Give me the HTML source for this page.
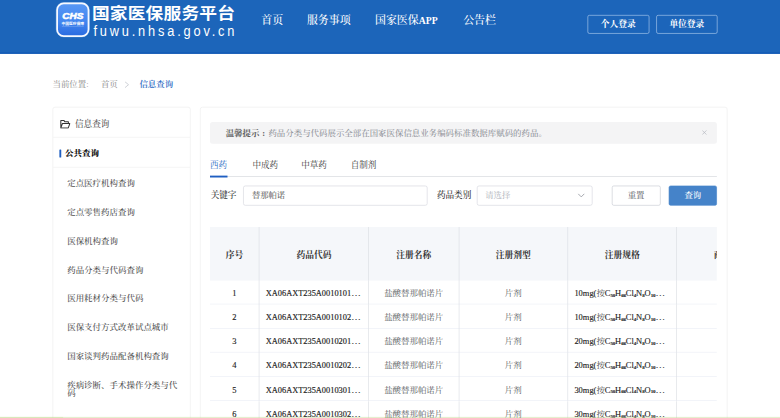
<!DOCTYPE html>
<html lang="zh-CN">
<head>
<meta charset="utf-8">
<title>国家医保服务平台</title>
<style>
*{box-sizing:border-box;margin:0;padding:0}
html,body{width:780px;height:418px;overflow:hidden;background:#fff}
body{font-family:"Liberation Serif","Noto Serif CJK SC",serif;color:#333;font-weight:500}
#stage{position:absolute;left:0;top:0;width:1248px;height:669px;transform:scale(0.625);transform-origin:0 0;overflow:hidden;background:#fff}
.abs{position:absolute}
/* header */
#hdr{position:absolute;left:0;top:0;width:1248px;height:86.3px;background:#1c65ba;border-bottom:2px solid #0f57b4}
#logo{position:absolute;left:88.5px;top:3px;width:55px;height:57px;overflow:visible}
#title{position:absolute;left:147px;top:2.5px;font-family:"Liberation Sans","Noto Sans CJK SC",sans-serif;font-weight:700;font-size:28.4px;line-height:36px;color:#fff;white-space:nowrap;letter-spacing:0.25px;transform:scaleY(0.89);transform-origin:0 50%}
#url{position:absolute;left:149.5px;top:34px;font-family:"Liberation Sans","Noto Sans CJK SC",sans-serif;font-weight:400;font-size:20.5px;line-height:30px;color:#fff;white-space:nowrap;letter-spacing:4.5px;transform:scaleY(1.12);transform-origin:0 50%}
.nav{position:absolute;top:19px;font-size:17.5px;line-height:26px;color:#fff;white-space:nowrap}
.lbtn{position:absolute;top:24px;width:98px;height:30px;border:1.3px solid rgba(210,228,250,.8);border-radius:3px;color:#fff;font-size:14px;font-weight:700;line-height:27.5px;text-align:center}
/* breadcrumb */
#bc{position:absolute;left:84px;top:125.2px;font-size:13.5px;line-height:20px;color:#999;white-space:nowrap}
#bc span{position:absolute;top:0}
/* sidebar */
#side{position:absolute;left:84px;top:170.5px;width:221px;height:520px;border:1.2px solid #ececec;border-radius:4px;background:#fff}
#side .h{position:absolute;left:0;top:0;width:100%;height:48px;border-bottom:1px solid #efefef}
#side .h2{position:absolute;left:0;top:48px;width:100%;height:48.5px;border-bottom:1px solid #efefef}
.mi{position:absolute;left:22.5px;font-size:13.55px;line-height:14px;color:#505050;white-space:nowrap}
/* main */
#main{position:absolute;left:320px;top:170.5px;width:844px;height:520px;border:1.2px solid #ececec;border-radius:4px;background:#fff}
#alert{position:absolute;left:336px;top:195px;width:811px;height:35px;background:#f4f4f5;border-radius:4px;font-size:13.5px;line-height:35.5px;color:#909399;padding-left:25px;white-space:nowrap}
#alert b{color:#5e5e5e;font-weight:700}
.tab{position:absolute;top:253px;font-size:13.7px;line-height:22px;color:#3a3a3a;font-weight:400;white-space:nowrap}
.lab{position:absolute;top:301.5px;font-size:13.8px;line-height:22px;color:#333;white-space:nowrap}
.inp{position:absolute;top:296.5px;height:32px;border:1.2px solid #d3d6dd;border-radius:3.5px;font-size:13.3px;line-height:30.5px;padding-left:13px;color:#666;background:#fff;white-space:nowrap}
.btn{position:absolute;top:296.5px;width:77.5px;height:32px;border:1.2px solid #c6c9d0;border-radius:3px;font-size:13.5px;font-weight:400;line-height:30px;text-align:center;color:#606266;background:#fff}
/* table */
#tbl{position:absolute;left:336px;top:363px;width:811px;height:320px;overflow:hidden}
#thead{position:absolute;left:0;top:0;width:811px;height:85.5px;background:#f5f7fa}
.th{position:absolute;top:0;height:85.5px;border-right:1.6px solid #dadde3;font-size:14px;font-weight:700;color:#333;line-height:90.5px;text-align:center;white-space:nowrap}
.row{position:absolute;left:0;width:811px;height:38.6px;border-bottom:1px solid #ebeef5}
.td{position:absolute;top:0;height:38.6px;border-right:1.6px solid #dadde3;font-size:13.5px;color:#5a5d63;font-weight:400;line-height:41px;text-align:center;white-space:nowrap;overflow:hidden}
.td.l{text-align:left;padding-left:10px}
.td.code{color:#222;font-size:13.35px;letter-spacing:0;-webkit-text-stroke:0.25px #222}
.el{letter-spacing:2px;margin-left:1px}
.lat{color:#222;-webkit-text-stroke:0.2px #222}
.lat .cj{-webkit-text-stroke:0}
sub{font-size:8px;font-weight:700;vertical-align:baseline;position:relative;top:1.5px;line-height:0;letter-spacing:-0.3px}
.cj{color:#444}
</style>
</head>
<body>
<div id="stage">
  <div id="hdr">
    <svg id="logo" viewBox="0 0 55 57">
      <defs>
        <linearGradient id="lg" x1="0" y1="0" x2="0" y2="1"><stop offset="0" stop-color="#5898f5"/><stop offset="0.55" stop-color="#4387f0"/><stop offset="1" stop-color="#2a6be0"/></linearGradient>
      </defs>
      <rect x="1" y="1" width="53" height="55" rx="12" ry="12" fill="none" stroke="#9cc3f7" stroke-opacity="0.4" stroke-width="1.6"/>
      <rect x="2.4" y="2.4" width="50.2" height="52.2" rx="10.5" ry="10.5" fill="url(#lg)" stroke="#f6f9ff" stroke-width="2.8"/>
      <text x="27.5" y="27" font-family="Liberation Sans, sans-serif" font-weight="700" font-style="italic" font-size="15.2" fill="#fff" stroke="#fff" stroke-width="1" text-anchor="middle" textLength="33.5" lengthAdjust="spacingAndGlyphs">CHS</text>
      <text x="27.5" y="36.4" font-family="Liberation Sans, Noto Sans CJK SC, sans-serif" font-weight="700" font-size="6" fill="#fff" text-anchor="middle" textLength="36" lengthAdjust="spacingAndGlyphs">中国医疗保障</text>
      <rect x="10" y="39.2" width="35" height="0.8" fill="#fff" fill-opacity="0.35"/>
    </svg>
    <div id="title">国家医保服务平台</div>
    <div id="url">fuwu.nhsa.gov.cn</div>
    <div class="nav" style="left:418px">首页</div>
    <div class="nav" style="left:491px">服务事项</div>
    <div class="nav" style="left:600px">国家医保<b style="font-size:15.5px">APP</b></div>
    <div class="nav" style="left:741px">公告栏</div>
    <div class="lbtn" style="left:939.5px;width:99.5px">个人登录</div>
    <div class="lbtn" style="left:1050px">单位登录</div>
  </div>

  <div id="bc">
    <span style="left:0">当前位置:</span>
    <span style="left:77.5px">首页</span>
    <svg class="abs" style="left:115px;top:5px" width="8" height="11" viewBox="0 0 8 11"><path d="M1 0.8 L6.6 5.5 L1 10.2" fill="none" stroke="#b9bdc4" stroke-width="1.1"/></svg>
    <span style="left:139px;color:#2b6cc4;font-weight:600">信息查询</span>
  </div>

  <div id="side">
    <div class="h">
      <svg class="abs" style="left:11px;top:19px" width="17" height="15.5" viewBox="0 0 17 15" preserveAspectRatio="none"><path d="M1.3 13.2 V1.6 H6.2 L7.8 3.8 H13.4 V6.3 M1.3 13.2 L3.9 6.3 H15.8 L13.2 13.2 Z" fill="none" stroke="#333" stroke-width="1.6" stroke-linejoin="round"/></svg>
      <div class="mi" style="left:35px;top:20px;color:#555;font-size:13.8px">信息查询</div>
    </div>
    <div class="h2">
      <div class="abs" style="left:9.5px;top:19px;width:3.5px;height:13px;background:#1f5fc2;border-radius:1px"></div>
      <div class="mi" style="left:19px;top:19.5px;font-weight:900;color:#111">公共查询</div>
    </div>
    <div class="mi" style="top:115.0px">定点医疗机构查询</div>
    <div class="mi" style="top:161.0px">定点零售药店查询</div>
    <div class="mi" style="top:207.0px">医保机构查询</div>
    <div class="mi" style="top:253.0px">药品分类与代码查询</div>
    <div class="mi" style="top:299.0px">医用耗材分类与代码</div>
    <div class="mi" style="top:345.0px">医保支付方式改革试点城市</div>
    <div class="mi" style="top:391.0px">国家谈判药品配备机构查询</div>
    <div class="mi" style="top:437.0px;white-space:normal;width:182px;line-height:13px">疾病诊断、手术操作分类与代码</div>
  </div>

  <div id="main"></div>
  <div id="alert"><b>温馨提示<span style="margin-left:4.5px">:</span></b><span style="position:absolute;left:93.5px;top:0">药品分类与代码展示全部在国家医保信息业务编码标准数据库赋码的药品。</span>
    <svg class="abs" style="left:787px;top:13px" width="8" height="8" viewBox="0 0 8 8"><path d="M0.7 0.7 L7.3 7.3 M7.3 0.7 L0.7 7.3" stroke="#b2b6be" stroke-width="1.1"/></svg>
  </div>

  <div class="tab" style="left:336px;color:#2b6cc4">西药</div>
  <div class="tab" style="left:404px">中成药</div>
  <div class="tab" style="left:482px">中草药</div>
  <div class="tab" style="left:561px">自制剂</div>
  <div class="abs" style="left:336px;top:281.5px;width:811px;height:1.8px;background:#d2d5db"></div>
  <div class="abs" style="left:336px;top:280.5px;width:28px;height:3px;background:#1f5fc2"></div>

  <div class="lab" style="left:337px">关键字</div>
  <div class="inp" style="left:389px;width:295px">替那帕诺</div>
  <div class="lab" style="left:699px">药品类别</div>
  <div class="inp" style="left:763px;width:185px;color:#b9bcc4;padding-left:12.5px">请选择
    <svg class="abs" style="left:160px;top:11.5px" width="12" height="8" viewBox="0 0 12 8"><path d="M1 1 L6 6 L11 1" fill="none" stroke="#999ca3" stroke-width="1.4"/></svg>
  </div>
  <div class="btn" style="left:979px">重置</div>
  <div class="btn" style="left:1070px;width:77px;background:#4583c9;border-color:#4583c9;color:#fff;font-weight:500">查询</div>

  <div id="tbl">
    <div id="thead">
      <div class="th" style="left:0;width:79.3px">序号</div>
      <div class="th" style="left:79.3px;width:175px">药品代码</div>
      <div class="th" style="left:254.3px;width:144.3px">注册名称</div>
      <div class="th" style="left:398.6px;width:174.4px">注册剂型</div>
      <div class="th" style="left:573px;width:174px">注册规格</div>
      <div class="th" style="left:747px;width:174px;border-right:0">商品名称</div>
    </div>
    <div class="row" style="top:85.5px">
      <div class="td lat" style="left:0;width:79.3px">1</div>
      <div class="td l code" style="left:79.3px;width:175px">XA06AXT235A0010101<span class="el">...</span></div>
      <div class="td" style="left:254.3px;width:144.3px">盐酸替那帕诺片</div>
      <div class="td" style="left:398.6px;width:174.4px">片剂</div>
      <div class="td l lat" style="left:573px;width:174px">10mg(<span class="cj">按</span>C<sub>50</sub>H<sub>66</sub>Cl<sub>4</sub>N<sub>8</sub>O<sub>10</sub><span class="el">...</span></div>
    </div>
    <div class="row" style="top:124.1px">
      <div class="td lat" style="left:0;width:79.3px">2</div>
      <div class="td l code" style="left:79.3px;width:175px">XA06AXT235A0010102<span class="el">...</span></div>
      <div class="td" style="left:254.3px;width:144.3px">盐酸替那帕诺片</div>
      <div class="td" style="left:398.6px;width:174.4px">片剂</div>
      <div class="td l lat" style="left:573px;width:174px">10mg(<span class="cj">按</span>C<sub>50</sub>H<sub>66</sub>Cl<sub>4</sub>N<sub>8</sub>O<sub>10</sub><span class="el">...</span></div>
    </div>
    <div class="row" style="top:162.7px">
      <div class="td lat" style="left:0;width:79.3px">3</div>
      <div class="td l code" style="left:79.3px;width:175px">XA06AXT235A0010201<span class="el">...</span></div>
      <div class="td" style="left:254.3px;width:144.3px">盐酸替那帕诺片</div>
      <div class="td" style="left:398.6px;width:174.4px">片剂</div>
      <div class="td l lat" style="left:573px;width:174px">20mg(<span class="cj">按</span>C<sub>50</sub>H<sub>66</sub>Cl<sub>4</sub>N<sub>8</sub>O<sub>10</sub><span class="el">...</span></div>
    </div>
    <div class="row" style="top:201.3px">
      <div class="td lat" style="left:0;width:79.3px">4</div>
      <div class="td l code" style="left:79.3px;width:175px">XA06AXT235A0010202<span class="el">...</span></div>
      <div class="td" style="left:254.3px;width:144.3px">盐酸替那帕诺片</div>
      <div class="td" style="left:398.6px;width:174.4px">片剂</div>
      <div class="td l lat" style="left:573px;width:174px">20mg(<span class="cj">按</span>C<sub>50</sub>H<sub>66</sub>Cl<sub>4</sub>N<sub>8</sub>O<sub>10</sub><span class="el">...</span></div>
    </div>
    <div class="row" style="top:239.9px">
      <div class="td lat" style="left:0;width:79.3px">5</div>
      <div class="td l code" style="left:79.3px;width:175px">XA06AXT235A0010301<span class="el">...</span></div>
      <div class="td" style="left:254.3px;width:144.3px">盐酸替那帕诺片</div>
      <div class="td" style="left:398.6px;width:174.4px">片剂</div>
      <div class="td l lat" style="left:573px;width:174px">30mg(<span class="cj">按</span>C<sub>50</sub>H<sub>66</sub>Cl<sub>4</sub>N<sub>8</sub>O<sub>10</sub><span class="el">...</span></div>
    </div>
    <div class="row" style="top:278.5px">
      <div class="td lat" style="left:0;width:79.3px">6</div>
      <div class="td l code" style="left:79.3px;width:175px">XA06AXT235A0010302<span class="el">...</span></div>
      <div class="td" style="left:254.3px;width:144.3px">盐酸替那帕诺片</div>
      <div class="td" style="left:398.6px;width:174.4px">片剂</div>
      <div class="td l lat" style="left:573px;width:174px">30mg(<span class="cj">按</span>C<sub>50</sub>H<sub>66</sub>Cl<sub>4</sub>N<sub>8</sub>O<sub>10</sub><span class="el">...</span></div>
    </div>
    <div class="row" style="top:317.1px">
      <div class="td lat" style="left:0;width:79.3px">7</div>
      <div class="td l code" style="left:79.3px;width:175px">XA06AXT235A0010401<span class="el">...</span></div>
      <div class="td" style="left:254.3px;width:144.3px">盐酸替那帕诺片</div>
      <div class="td" style="left:398.6px;width:174.4px">片剂</div>
      <div class="td l lat" style="left:573px;width:174px">50mg(<span class="cj">按</span>C<sub>50</sub>H<sub>66</sub>Cl<sub>4</sub>N<sub>8</sub>O<sub>10</sub><span class="el">...</span></div>
    </div>
  </div>
  <div class="abs" style="left:0;top:667.2px;width:1248px;height:2px;background:rgba(190,216,140,.42)"></div><div class="abs" style="left:0;top:667.2px;width:101px;height:2px;background:rgba(190,216,140,.3)"></div>
</div>
</body>
</html>
